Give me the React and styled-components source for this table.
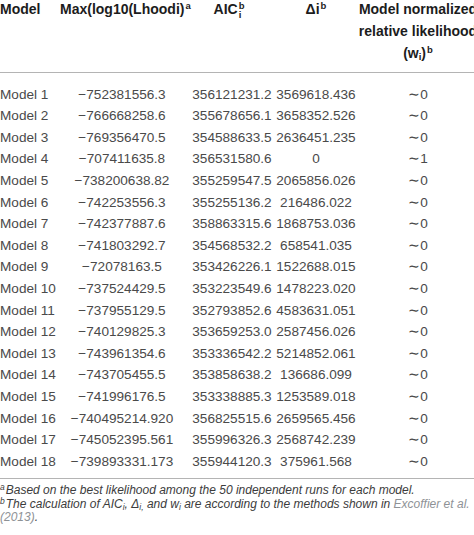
import React from "react";
import styled, { createGlobalStyle } from "styled-components";

const Global = createGlobalStyle`
  html, body { margin: 0; padding: 0; background: #fff; overflow: hidden; }
  body { font-family: "Liberation Sans", Arial, sans-serif; }
`;

const Page = styled.div`
  width: 474px;
  height: 535px;
  overflow: hidden;
  background: #fff;
`;

const Table = styled.table`
  width: 478px;
  margin-top: -2px;
  border-collapse: collapse;
  table-layout: fixed;
  font-size: 13.6px;
  color: #4a4a4a;
`;

const HeadRow = styled.tr`
  border-bottom: 1px solid #b4b4b4;
`;

const HeadCell = styled.th`
  padding: 0 0 8px ${(p) => p.$padLeft || 0}px;
  font-size: 14px;
  font-weight: bold;
  color: #1c1c1c;
  line-height: 22px;
  text-align: ${(p) => p.$align || "center"};
  vertical-align: top;
  white-space: nowrap;
`;

const Body = styled.tbody`
  border-bottom: 1px solid #b4b4b4;
  & tr:first-child td { padding-top: 10.6px; }
  & tr:last-child td { padding-bottom: 6px; }
`;

const Cell = styled.td`
  padding: 0 0 0 ${(p) => p.$padLeft || 0}px;
  line-height: 21.6px;
  text-align: ${(p) => p.$align || "center"};
  white-space: nowrap;
`;

const Sup = styled.sup`
  font-size: 9.5px;
  line-height: 0;
  vertical-align: 5px;
  margin-left: 1px;
`;

const Sub = styled.sub`
  font-size: 9.5px;
  line-height: 0;
  vertical-align: -2px;
`;

const Stack = styled.span`
  display: inline-flex;
  flex-direction: column;
  vertical-align: middle;
  font-size: 9.5px;
  line-height: 9px;
  margin-left: 1px;
  text-align: left;
`;

const Notes = styled.div`
  margin-top: 5px;
  font-size: 12px;
  line-height: 13.6px;
  font-style: italic;
  color: #3c3c3c;
  white-space: nowrap;
`;

const NoteMark = styled.sup`
  font-size: 8.5px;
  line-height: 0;
  vertical-align: 4px;
  margin-right: 1px;
`;

const NoteSub = styled.sub`
  font-size: 8.5px;
  line-height: 0;
  vertical-align: -2px;
`;

const Ref = styled.span`
  color: #8e9296;
`;

const rows = [
  ["Model 1", "\u2212752381556.3", "356121231.2", "3569618.436", "\u223c0"],
  ["Model 2", "\u2212766668258.6", "355678656.1", "3658352.526", "\u223c0"],
  ["Model 3", "\u2212769356470.5", "354588633.5", "2636451.235", "\u223c0"],
  ["Model 4", "\u2212707411635.8", "356531580.6", "0", "\u223c1"],
  ["Model 5", "\u2212738200638.82", "355259547.5", "2065856.026", "\u223c0"],
  ["Model 6", "\u2212742253556.3", "355255136.2", "216486.022", "\u223c0"],
  ["Model 7", "\u2212742377887.6", "358863315.6", "1868753.036", "\u223c0"],
  ["Model 8", "\u2212741803292.7", "354568532.2", "658541.035", "\u223c0"],
  ["Model 9", "\u221272078163.5", "353426226.1", "1522688.015", "\u223c0"],
  ["Model 10", "\u2212737524429.5", "353223549.6", "1478223.020", "\u223c0"],
  ["Model 11", "\u2212737955129.5", "352793852.6", "4583631.051", "\u223c0"],
  ["Model 12", "\u2212740129825.3", "353659253.0", "2587456.026", "\u223c0"],
  ["Model 13", "\u2212743961354.6", "353336542.2", "5214852.061", "\u223c0"],
  ["Model 14", "\u2212743705455.5", "353858638.2", "136686.099", "\u223c0"],
  ["Model 15", "\u2212741996176.5", "353338885.3", "1253589.018", "\u223c0"],
  ["Model 16", "\u2212740495214.920", "356825515.6", "2659565.456", "\u223c0"],
  ["Model 17", "\u2212745052395.561", "355996326.3", "2568742.239", "\u223c0"],
  ["Model 18", "\u2212739893331.173", "355944120.3", "375961.568", "\u223c0"],
];

export default function App() {
  return (
    <Page>
      <Global />
      <Table>
        <colgroup>
          <col style={{ width: 60 }} />
          <col style={{ width: 124 }} />
          <col style={{ width: 90 }} />
          <col style={{ width: 84 }} />
          <col style={{ width: 120 }} />
        </colgroup>
        <thead>
          <HeadRow>
            <HeadCell $align="left">Model</HeadCell>
            <HeadCell>
              Max(log10(Lhoodi)<Sup>a</Sup>
            </HeadCell>
            <HeadCell>
              AIC
              <Stack>
                <span>b</span>
                <span>i</span>
              </Stack>
            </HeadCell>
            <HeadCell>
              Δi<Sup>b</Sup>
            </HeadCell>
            <HeadCell>
              Model normalized
              <br />
              relative likelihood
              <br />
              (w<Sub>i</Sub>)<Sup>b</Sup>
            </HeadCell>
          </HeadRow>
        </thead>
        <Body>
          {rows.map((r) => (
            <tr key={r[0]}>
              <Cell $align="left">{r[0]}</Cell>
              <Cell>{r[1]}</Cell>
              <Cell $padLeft={6}>{r[2]}</Cell>
              <Cell>{r[3]}</Cell>
              <Cell>{r[4]}</Cell>
            </tr>
          ))}
        </Body>
      </Table>
      <Notes>
        <div>
          <NoteMark>a</NoteMark>Based on the best likelihood among the 50 independent runs for each model.
        </div>
        <div>
          <NoteMark>b</NoteMark>The calculation of AIC<NoteSub>i</NoteSub>, Δ<NoteSub>i,</NoteSub> and w
          <NoteSub>i</NoteSub> are according to the methods shown in <Ref>Excoffier et al.</Ref>
        </div>
        <div>
          <Ref>(2013)</Ref>.
        </div>
      </Notes>
    </Page>
  );
}
